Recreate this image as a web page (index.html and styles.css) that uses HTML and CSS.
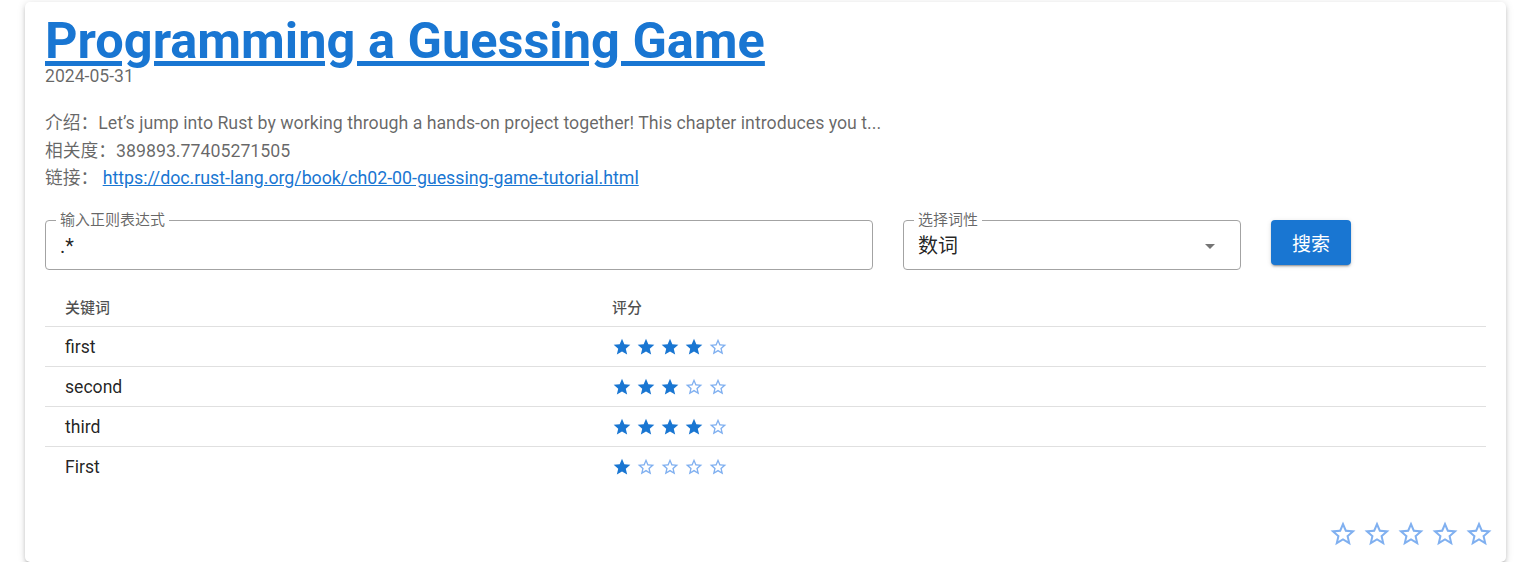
FILE: index.html
```html
<!DOCTYPE html>
<html lang="zh">
<head>
<meta charset="utf-8">
<title>Programming a Guessing Game</title>
<link rel="stylesheet" href="styles.css">
</head>
<body>
<svg class="defs" width="0" height="0" aria-hidden="true">
  <symbol id="star-full" viewBox="0 0 24 24"><path d="M12 17.27 18.18 21l-1.64-7.03L22 9.24l-7.19-.61L12 2 9.19 8.63 2 9.24l5.46 4.73L5.82 21z"/></symbol>
  <symbol id="star-empty" viewBox="0 0 24 24"><path d="M22 9.24l-7.19-.62L12 2 9.19 8.63 2 9.24l5.46 4.73L5.82 21 12 17.27 18.18 21l-1.63-7.03L22 9.24zM12 15.4l-3.76 2.27 1-4.28-3.32-2.88 4.38-.38L12 6.1l1.710 4.04 4.38.38-3.32 2.88 1 4.28L12 15.4z"/></symbol>
</svg>
<div class="card">
  <h1 class="title"><a href="https://doc.rust-lang.org/book/ch02-00-guessing-game-tutorial.html">Programming a Guessing Game</a></h1>
  <div class="date">2024-05-31</div>
  <div class="info">
    <p>介绍：Let’s jump into Rust by working through a hands-on project together! This chapter introduces you t...</p>
    <p>相关度：389893.77405271505</p>
    <p>链接： <a href="https://doc.rust-lang.org/book/ch02-00-guessing-game-tutorial.html">https://doc.rust-lang.org/book/ch02-00-guessing-game-tutorial.html</a></p>
  </div>
  <div class="form">
    <div class="field field-regex">
      <span class="field-label">输入正则表达式</span>
      <span class="field-value">.*</span>
    </div>
    <div class="field field-select">
      <span class="field-label">选择词性</span>
      <span class="field-value select-value">数词</span>
      <svg class="arrow" viewBox="0 0 24 24" width="24" height="24"><path d="M7 10l5 5 5-5z"/></svg>
    </div>
    <button class="btn">搜索</button>
  </div>
  <table class="table">
    <thead>
      <tr><th class="col-key">关键词</th><th>评分</th></tr>
    </thead>
    <tbody>
      <tr><td>first</td><td><div class="rating"><svg class="s full"><use href="#star-full"/></svg><svg class="s full"><use href="#star-full"/></svg><svg class="s full"><use href="#star-full"/></svg><svg class="s full"><use href="#star-full"/></svg><svg class="s empty"><use href="#star-empty"/></svg></div></td></tr>
      <tr><td>second</td><td><div class="rating"><svg class="s full"><use href="#star-full"/></svg><svg class="s full"><use href="#star-full"/></svg><svg class="s full"><use href="#star-full"/></svg><svg class="s empty"><use href="#star-empty"/></svg><svg class="s empty"><use href="#star-empty"/></svg></div></td></tr>
      <tr><td>third</td><td><div class="rating"><svg class="s full"><use href="#star-full"/></svg><svg class="s full"><use href="#star-full"/></svg><svg class="s full"><use href="#star-full"/></svg><svg class="s full"><use href="#star-full"/></svg><svg class="s empty"><use href="#star-empty"/></svg></div></td></tr>
      <tr><td>First</td><td><div class="rating"><svg class="s full"><use href="#star-full"/></svg><svg class="s empty"><use href="#star-empty"/></svg><svg class="s empty"><use href="#star-empty"/></svg><svg class="s empty"><use href="#star-empty"/></svg><svg class="s empty"><use href="#star-empty"/></svg></div></td></tr>
    </tbody>
  </table>
  <div class="footer">
    <div class="rating rating-lg">
      <svg class="l empty"><use href="#star-empty"/></svg><svg class="l empty"><use href="#star-empty"/></svg><svg class="l empty"><use href="#star-empty"/></svg><svg class="l empty"><use href="#star-empty"/></svg><svg class="l empty"><use href="#star-empty"/></svg>
    </div>
  </div>
</div>
</body>
</html>
```
FILE: styles.css
```css
* { box-sizing: border-box; }
html, body { margin: 0; padding: 0; background: #fff; }
body {
  font-family: Roboto, "Noto Sans CJK SC", sans-serif;
  color: rgba(0,0,0,0.87);
}
.defs { position: absolute; width: 0; height: 0; overflow: hidden; }

.card {
  margin: 2px 13px 0 25px;
  padding: 15px 20px 13px 20px;
  background: #fff;
  border-radius: 5px;
  box-shadow: 0px 3px 3px -2px rgba(0,0,0,0.2), 0px 3px 4px 0px rgba(0,0,0,0.14), 0px 1px 8px 0px rgba(0,0,0,0.12);
}

.title {
  margin: 0;
  font-size: 50.5px;
  line-height: 48px;
  font-weight: 700;
}
.title a { color: #1976d2; text-decoration: underline; }

.date {
  margin-top: 1px;
  font-size: 17.6px;
  line-height: 20px;
  color: rgba(0,0,0,0.6);
}

.info { margin-top: 24px; }
.info p {
  margin: 0;
  font-size: 17.75px;
  line-height: 27.5px;
  color: rgba(0,0,0,0.6);
}
.info a { color: #1976d2; }

.form {
  margin-top: 27px;
  display: flex;
  align-items: flex-start;
  gap: 30px;
}
.field {
  position: relative;
  height: 50px;
  border: 1px solid #a3a3a3;
  border-radius: 4px;
  display: flex;
  align-items: center;
  padding: 2px 14px 0 14px;
}
.field-regex { width: 828px; }
.field-select { width: 338px; justify-content: space-between; padding-right: 18px; }
.field-label {
  position: absolute;
  top: -11px;
  left: 10px;
  padding: 0 4px;
  background: #fff;
  font-size: 15px;
  line-height: 20px;
  color: rgba(0,0,0,0.6);
}
.field-value {
  font-size: 20px;
  line-height: 24px;
  color: rgba(0,0,0,0.87);
}
.arrow { fill: rgba(0,0,0,0.54); }

.btn {
  width: 80px;
  height: 45px;
  border: none;
  border-radius: 4px;
  background: #1976d2;
  color: #fff;
  font-family: Roboto, "Noto Sans CJK SC", sans-serif;
  font-size: 19px;
  box-shadow: 0px 3px 1px -2px rgba(0,0,0,0.2), 0px 2px 2px 0px rgba(0,0,0,0.14), 0px 1px 5px 0px rgba(0,0,0,0.12);
}

.table {
  margin-top: 17px;
  width: 100%;
  border-collapse: collapse;
}
.table th, .table td {
  height: 40px;
  padding: 0 20px;
  text-align: left;
  vertical-align: middle;
  border-bottom: 1px solid #e0e0e0;
}
.table th {
  font-size: 15px;
  font-weight: 500;
  color: rgba(0,0,0,0.7);
}
.table td {
  font-size: 17.6px;
  color: rgba(0,0,0,0.87);
}
.table tbody tr:last-child td { border-bottom: none; }
.col-key { width: 547px; }

.rating { display: flex; align-items: center; gap: 4px; }
.s { width: 20px; height: 20px; }
.full { fill: #1976d2; }
.empty { fill: #80b0f0; }

.footer {
  margin-top: 32px;
  margin-right: -8px;
  display: flex;
  justify-content: flex-end;
}
.l { width: 30px; height: 30px; }
```
